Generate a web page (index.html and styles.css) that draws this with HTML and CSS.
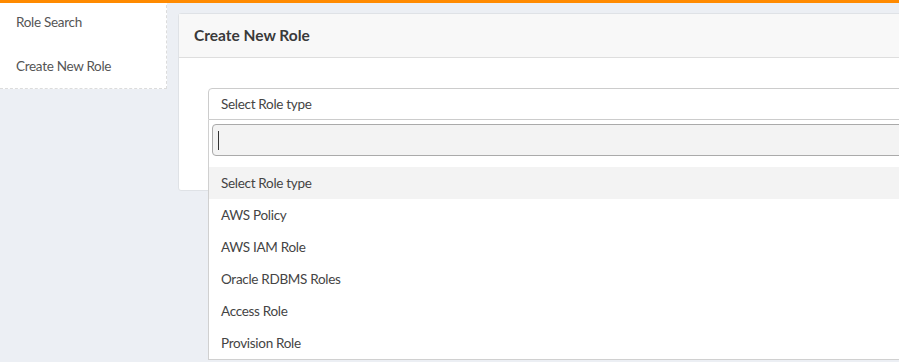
FILE: index.html
```html
<!DOCTYPE html>
<html>
<head>
    <title>Roles - Create New Role</title>
    <link rel="stylesheet" href="styles.css">
</head>
<body>
    <div class="topbar"></div>

    <div class="layout">
        <div class="sidebar">
            <a href="#">Role Search</a>
            <a href="#">Create New Role</a>
        </div>

        <div class="main">
            <div class="panel">
                <div class="panel-heading">Create New Role</div>
                <div class="panel-body">
                    <div class="select-wrap">
                        <div class="select-box">Select Role type</div>
                        <div class="dropdown">
                            <div class="dropdown-search">
                                <input type="text" class="search-field">
                                <span class="caret"></span>
                            </div>
                            <ul class="options">
                                <li class="highlighted">Select Role type</li>
                                <li>AWS Policy</li>
                                <li>AWS IAM Role</li>
                                <li>Oracle RDBMS Roles</li>
                                <li>Access Role</li>
                                <li>Provision Role</li>
                            </ul>
                        </div>
                    </div>
                </div>
            </div>
        </div>
    </div>
</body>
</html>
```

FILE: styles.css
```css
body {
    margin: 0;
    background-color: #eceff4;
    color: #555;
    font-family: Lato, "Liberation Sans", sans-serif;
    font-size: 13.5px;
    letter-spacing: -0.3px;
    overflow: hidden;
    height: 100vh;
}
.topbar {
    position: fixed;
    top: 0;
    left: 0;
    right: 0;
    height: 3px;
    background: #ff8a00;
    z-index: 10;
}
.layout {
    display: flex;
    align-items: flex-start;
}
.sidebar {
    width: 166px;
    flex-shrink: 0;
    background: white;
    border-right: 1px dashed #dcdcdc;
    border-bottom: 1px dashed #dcdcdc;
    display: flex;
    flex-direction: column;
}
.sidebar a {
    display: block;
    height: 44px;
    line-height: 44px;
    padding: 0 16px;
    color: #555;
    text-decoration: none;
}
.main {
    flex: 1;
    padding: 13px 0 0 11px;
    min-width: 760px;
}
.panel {
    background: white;
    border: 1px solid #dfe2e6;
    border-radius: 3px;
    margin-right: -40px;
}
.panel-heading {
    height: 43px;
    line-height: 43px;
    padding: 0 15px;
    background: #f8f8f8;
    border-bottom: 1px solid #dedede;
    font-weight: bold;
    font-size: 15.5px;
    letter-spacing: 0;
    color: #3a3a3a;
}
.panel-body {
    height: 132px;
    padding: 30px 0 0 29px;
    box-sizing: border-box;
}
.select-wrap {
    position: relative;
}
.select-box {
    height: 30px;
    line-height: 30px;
    padding: 0 12px;
    border: 1px solid #cccccc;
    border-radius: 4px 4px 0 0;
    background: white;
    color: #444;
}
.dropdown {
    position: absolute;
    top: 32px;
    left: 0;
    right: 0;
    background: white;
    border: 1px solid #d0d0d0;
    border-top: none;
    z-index: 5;
}
.dropdown-search {
    padding: 4px 0 4px 3px;
    position: relative;
}
.search-field {
    display: block;
    box-sizing: border-box;
    width: 100%;
    height: 32px;
    border: 1px solid #aaaaaa;
    border-radius: 4px;
    background: #f3f3f3;
    outline: none;
    margin: 0;
}
.caret {
    position: absolute;
    left: 9px;
    top: 11px;
    width: 1px;
    height: 19px;
    background: #333;
}
.options {
    list-style: none;
    margin: 0;
    padding: 7px 0 0 0;
}
.options li {
    height: 32px;
    line-height: 32px;
    padding: 0 12px;
    color: #444;
}
.options li.highlighted {
    background: #f3f3f3;
}
```
